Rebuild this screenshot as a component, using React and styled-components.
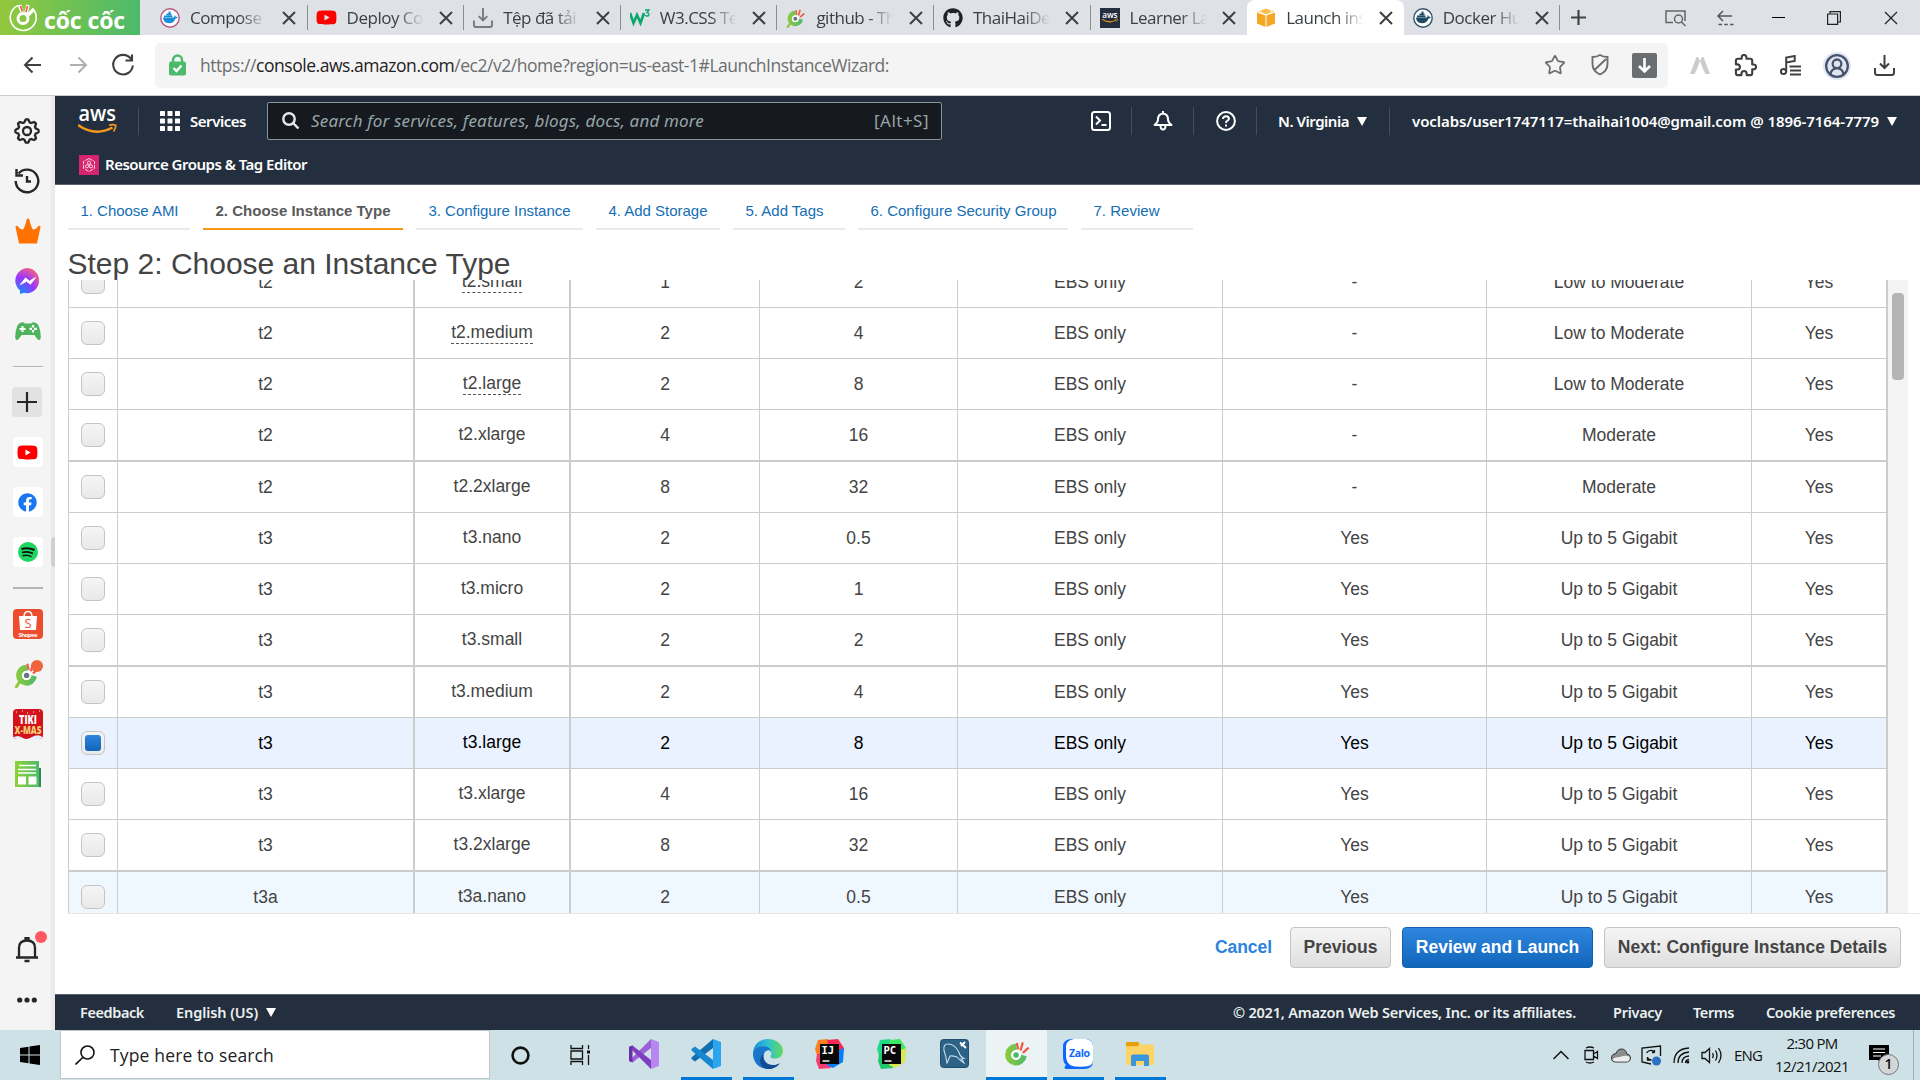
import React, { useLayoutEffect, useRef } from "react";
import styled, { createGlobalStyle, css } from "styled-components";
import { Star, CircleUserRound } from "lucide-react";
import { FaYoutube, FaGithub, FaFacebook } from "react-icons/fa";

const ui = `"Open Sans", "Noto Sans", sans-serif`;
const ember = `"Noto Sans", "Open Sans", sans-serif`;
const arial = `"Liberation Sans", Arial, sans-serif`;

const Global = createGlobalStyle`
  * { box-sizing: border-box; }
  body { margin: 0; background: #fff; overflow: hidden; }
  svg { display: block; flex: none; }
`;

const Screen = styled.div`
  width: 1920px;
  height: 1080px;
  display: flex;
  flex-direction: column;
  overflow: hidden;
  font-family: ${ui};
  color: #444;
`;

/* ---------- text tracked to a fixed measure ---------- */
const Measure = styled.span`
  display: block;
  flex: none;
  width: ${(p) => p.$w}px;
  margin-left: ${(p) => p.$ml || 0}px;
  white-space: nowrap;
`;

function Fit({ w, ml, children }) {
  const ref = useRef(null);
  useLayoutEffect(() => {
    const el = ref.current;
    el.style.letterSpacing = "0px";
    const natural = el.getBoundingClientRect().width;
    el.style.letterSpacing = `${(w - natural) / el.textContent.length}px`;
  }, [w, children]);
  return (
    <Measure $w={w} $ml={ml}>
      <span ref={ref}>{children}</span>
    </Measure>
  );
}

/* ---------- browser tab strip ---------- */
const TabStrip = styled.div`
  height: 35px;
  flex: none;
  display: flex;
  background: #dee1e6;
`;
const Brand = styled.div`
  width: 140px;
  display: flex;
  align-items: center;
  padding-left: 9px;
  gap: 6px;
  color: #fff;
  background: linear-gradient(90deg, #93c83d, #4cba6b);
  font: 700 23px/30px "Open Sans", sans-serif;
`;
const BrandName = styled.div`
  padding-top: 4px;
`;
const Tabs = styled.div`
  display: flex;
  margin-left: 11px;
`;
const Tab = styled.div`
  width: 156.6px;
  height: 35px;
  display: flex;
  align-items: center;
  padding-left: 9px;
  font-size: 17px;
  color: #3c4043;
  ${(p) =>
    p.$active &&
    css`
      background: #fff;
      border-radius: 8px 8px 0 0;
    `}
`;
const TabTitle = styled.div`
  width: 81px;
  margin-left: 10px;
  overflow: hidden;
  white-space: nowrap;
  letter-spacing: -0.5px;
  mask-image: linear-gradient(90deg, #000 64%, transparent 98%);
`;
const TabEnd = styled.div`
  display: flex;
  align-items: center;
  justify-content: space-between;
  width: 26px;
  margin-left: 14px;
  height: 25px;
  border-right: 1px solid ${(p) => (p.$line ? "#8a8d91" : "transparent")};
`;
const WindowTools = styled.div`
  display: flex;
  align-items: center;
  margin-left: auto;
  color: #222;
`;
const ToolSlot = styled.div`
  width: ${(p) => p.$w}px;
  display: flex;
  justify-content: center;
`;

/* ---------- address row ---------- */
const AddressRow = styled.div`
  height: 61px;
  flex: none;
  display: flex;
  align-items: center;
  background: #fff;
  border-bottom: 1px solid #cdcdcd;
  color: #3c4043;
`;
const NavButtons = styled.div`
  display: flex;
  align-items: center;
  width: 155px;
  padding-left: 10px;
`;
const UrlField = styled.div`
  width: 1513px;
  height: 45px;
  display: flex;
  align-items: center;
  padding-left: 14px;
  border-radius: 5px;
  background: #f4f4f4;
  font-size: 17.5px;
  color: #6b6e70;
  b {
    font-weight: 400;
    color: #1f2123;
  }
`;
const FieldIcons = styled.div`
  display: flex;
  align-items: center;
  margin-left: auto;
  padding-right: 1px;
  color: #6a6e70;
`;
const DownBox = styled.div`
  width: 25px;
  height: 25px;
  border-radius: 2px;
  background: #6a6e70;
  display: grid;
  place-items: center;
`;
const Extensions = styled.div`
  display: flex;
  align-items: center;
  padding: 1px 0 0 8px;
`;
const Halo = styled.div`
  width: 28px;
  height: 28px;
  border-radius: 50%;
  background: #dfe6f2;
  display: grid;
  place-items: center;
`;

/* ---------- browser sidebar ---------- */
const Middle = styled.div`
  display: flex;
  height: 934px;
  flex: none;
`;
const Sidebar = styled.div`
  width: 55px;
  flex: none;
  display: flex;
  flex-direction: column;
  padding: 10px 0 5px;
  background: linear-gradient(90deg, #f4f4f4 50px, #ededed 51px, #e8e8e8 55px);
  color: #262626;
`;
const SideItem = styled.div`
  position: relative;
  height: 50px;
  width: 55px;
  padding-right: ${(p) => p.$pr || 0}px;
  display: grid;
  place-items: center;
`;
const SideRule = styled.div`
  width: 30px;
  height: ${(p) => p.$h}px;
  margin: ${(p) => p.$m};
  background: #b5b5b5;
`;
const SideGap = styled.div`
  flex: 1;
`;
const AppTile = styled.div`
  width: 30px;
  height: 30px;
  border-radius: 4px;
  overflow: hidden;
  display: grid;
  place-items: center;
  background: ${(p) => p.$bg || "#fff"};
`;
const Dot = styled.div`
  position: absolute;
  left: ${(p) => p.$x}px;
  top: ${(p) => p.$y}px;
  width: 12px;
  height: 12px;
  border-radius: 50%;
  background: ${(p) => p.$c};
`;
const SideHandle = styled.div`
  position: absolute;
  right: 0;
  top: 10px;
  width: 4px;
  height: 30px;
  border-radius: 4px 0 0 4px;
  background: #cfcfcf;
`;

/* ---------- console ---------- */
const Console = styled.div`
  flex: 1;
  display: flex;
  flex-direction: column;
  background: #fff;
`;
const Header = styled.div`
  height: 89px;
  flex: none;
  background: #232f3e;
  border-bottom: 1px solid #5a6470;
  color: #fff;
  font-family: ${ember};
  font-weight: 600;
  font-size: 15px;
`;
const HeaderRow = styled.div`
  height: 50px;
  display: flex;
  align-items: center;
  padding-left: 23px;
`;
const Place = styled.div`
  margin-left: ${(p) => p.$ml}px;
`;
const VRule = styled.div`
  width: 1px;
  height: 28px;
  background: #424e5c;
  margin-left: ${(p) => p.$ml}px;
`;
const SearchBox = styled.div`
  width: 675px;
  height: 38px;
  margin-left: 21px;
  display: flex;
  align-items: center;
  padding: 0 12px 1px 14px;
  border: 1px solid #879596;
  border-radius: 2px;
  background: #16191f;
  color: #95a5a6;
  font-weight: 400;
  font-size: 17px;
  i {
    margin-left: 12px;
  }
  div {
    margin-left: auto;
  }
`;
const Caret = styled.div`
  margin-left: 8px;
  border: 5px solid transparent;
  border-top: 9px solid #fff;
  border-bottom: 0;
`;
const Favorites = styled.div`
  height: 38px;
  display: flex;
  align-items: center;
  padding-left: 24px;
  gap: 6px;
`;
const FavoriteName = styled.div`
  padding-bottom: 2px;
`;

const Steps = styled.div`
  display: flex;
  gap: 13px;
  padding: 0 0 0 13px;
  height: 45px;
  flex: none;
  font-family: ${arial};
`;
const Step = styled.div`
  width: ${(p) => p.$w}px;
  padding: 17px 0 0 12.5px;
  white-space: nowrap;
  font-size: 15px;
  line-height: 18px;
  color: ${(p) => (p.$on ? "#5a5a5a" : "#146eb4")};
  font-weight: ${(p) => (p.$on ? 700 : 400)};
  border-bottom: 2px solid ${(p) => (p.$on ? "#f7981d" : "#eaeaea")};
`;
const Title = styled.h1`
  margin: 0 0 0 12.5px;
  height: 50px;
  flex: none;
  position: relative;
  padding-top: 17px;
  font: 400 30px/34px ${arial};
  color: #444;
`;
const TableArea = styled.div`
  height: 634px;
  flex: none;
  display: flex;
  margin-left: 13px;
  overflow: hidden;
  border-bottom: 1px solid #e6e6e6;
`;
const Table = styled.div`
  width: 1820px;
  height: max-content;
  margin-top: -23px;
  border-left: 1px solid #ccc;
`;
const Row = styled.div`
  display: grid;
  grid-template-columns: 49px 297px 156px 189px 198px 265px 264px 265px 136px;
  height: ${(p) => (p.$thick ? 52 : 51)}px;
  font: 17.5px/20px ${arial};
  color: ${(p) => (p.$selected ? "#000" : "#444")};
  background: ${(p) => p.$bg};
`;
const Cell = styled.div`
  display: flex;
  align-items: center;
  justify-content: center;
  border-right: ${(p) => (p.$wide ? 2 : 1)}px solid #ccc;
  border-bottom: ${(p) => (p.$thick ? 2 : 1)}px solid #ccc;
`;
const TypeName = styled.span`
  height: 22px;
  border-bottom: 1px dashed ${(p) => (p.$hint ? "#555" : "transparent")};
`;
const Box = styled.div`
  width: 24px;
  height: 24px;
  border: 1px solid #c4c4c4;
  border-radius: 6px;
  display: grid;
  place-items: center;
  background: linear-gradient(#f5f5f5, #e9e9e9);
`;
const Mark = styled.div`
  width: 16px;
  height: 16px;
  border-radius: 3px;
  background: linear-gradient(#2e84dd, #1166bb);
`;
const ScrollTrack = styled.div`
  width: 20px;
  padding: 13px 4px 0;
  background: #f4f4f4;
`;
const Thumb = styled.div`
  height: 87px;
  border-radius: 4px;
  background: #b5b5b5;
`;
const Actions = styled.div`
  height: 80px;
  flex: none;
  display: flex;
  justify-content: flex-end;
  padding: 13px 19px 0 0;
  font: 700 17.5px/39px ${arial};
  white-space: nowrap;
`;
const Cancel = styled.div`
  color: #2b83db;
  margin-right: 18px;
  padding-top: 1px;
`;
const Button = styled.div`
  width: ${(p) => p.$w}px;
  height: 41px;
  display: flex;
  justify-content: center;
  margin-left: ${(p) => p.$ml || 0}px;
  border-radius: 4px;
  border: 1px solid ${(p) => (p.$primary ? "#1462ad" : "#c4c4c4")};
  color: ${(p) => (p.$primary ? "#fff" : "#444")};
  background: ${(p) =>
    p.$primary
      ? "linear-gradient(#2f86de, #1166bb)"
      : "linear-gradient(#f5f5f5, #dfdfdf)"};
`;
const Footer = styled.div`
  height: 36px;
  flex: none;
  display: flex;
  align-items: center;
  padding: 0 25px 1px 25px;
  border-top: 1px solid #5a6470;
  background: #232f3e;
  color: #eceff0;
  font: 600 14.5px/20px ${ember};
`;

/* ---------- Windows taskbar ---------- */
const Taskbar = styled.div`
  height: 50px;
  flex: none;
  display: flex;
  background: #cde1e6;
  color: #111;
`;
const StartButton = styled.div`
  width: 60px;
  display: grid;
  place-items: center;
`;
const TaskSearch = styled.div`
  width: 430px;
  height: 49px;
  display: flex;
  align-items: center;
  padding-left: 14px;
  gap: 15px;
  background: #fff;
  border: 1px solid #bfc6c8;
  font-size: 17.5px;
  color: #222;
`;
const TaskSlot = styled.div`
  width: ${(p) => p.$w || 62}px;
  height: 50px;
  margin-left: ${(p) => p.$ml || 0}px;
  display: flex;
  flex-direction: column;
  align-items: center;
  justify-content: center;
  background: ${(p) => (p.$active ? "#ebf3f5" : "none")};
`;
const IconHold = styled.div`
  flex: 1;
  display: grid;
  place-items: center;
  padding-bottom: ${(p) => (p.$run ? 0 : 3)}px;
`;
const RunBar = styled.div`
  width: ${(p) => (p.$active ? 61 : 51)}px;
  height: 3px;
  background: #0078d7;
`;
const Tray = styled.div`
  display: flex;
  align-items: center;
  margin-left: auto;
  font-size: 15px;
`;
const TraySlot = styled.div`
  width: 30px;
  display: flex;
  justify-content: center;
`;
const Clock = styled.div`
  width: 100px;
  height: 50px;
  display: flex;
  flex-direction: column;
  align-items: center;
  padding-top: 2px;
  line-height: 23px;
`;
const Notice = styled.div`
  position: relative;
  width: 52px;
  height: 50px;
  margin-right: 6px;
  padding: 15px 0 0 7px;
  border-right: 1px solid #9fb0b5;
`;
const Badge = styled.div`
  position: absolute;
  left: 16px;
  top: 24px;
  width: 21px;
  height: 21px;
  border: 1px solid #777;
  border-radius: 50%;
  background: #d3d6d7;
  font: 600 14px/18px ${ui};
  text-align: center;
`;

/* ---------- drawings ---------- */
const Ico = ({ s = 20, w, h, vb, children, sw = 2, ...p }) => (
  <svg
    width={w || s}
    height={h || s}
    viewBox={vb || `0 0 ${w || s} ${h || s}`}
    fill="none"
    stroke="currentColor"
    strokeWidth={sw}
    {...p}
  >
    {children}
  </svg>
);

const Cross = ({ s = 13, sw = 2 }) => (
  <Ico s={s} sw={sw}>
    <path d={`M1 1L${s - 1} ${s - 1}M${s - 1} 1L1 ${s - 1}`} />
  </Ico>
);

const Whale = ({ ring, fill }) => (
  <Ico s={20} sw={1.4}>
    <circle cx="10" cy="10" r="9.200" fill="#fff" stroke={ring} />
    <path
      d="M3 9.600h10.400c.8 0 1.300-1 1-2.600 1 .6 1.500 1.200 1.500 1.900.7-.1 1.400 0 1.900.4-.5 1-1.400 1.200-2.300 1.200-1 3.200-3 4.800-6.300 4.800-3.700 0-5.900-1.900-6.200-5.700z"
      fill={fill}
      stroke="none"
    />
    <path d="M4 8.400h8.500M6.500 6.400h5M8.500 4.500h2" stroke={fill} strokeWidth="1.900" />
  </Ico>
);

const CocRing = ({ s = 24, tail, c1 = "#8fca3c", c2 = "#4cba6b", rays = "#f0593e" }) => (
  <svg width={s} height={s} viewBox="0 0 24 24" fill="none">
    <defs>
      <linearGradient id={`cc${s}`} x1="0" x2="1">
        <stop offset="0" stopColor={c1} />
        <stop offset="1" stopColor={c2} />
      </linearGradient>
    </defs>
    {tail && <path d="M6 17L2 23" stroke={c1} strokeWidth="2.500" strokeLinecap="round" />}
    <path
      d="M11 3.300A9.300 9.300 0 1 0 20.300 14L15 12.500A4 4 0 1 1 12 9z"
      fill={`url(#cc${s})`}
    />
    <circle cx="11.200" cy="12.800" r="4.200" fill="#fff" />
    <circle cx="11.200" cy="12.800" r="2.400" fill={tail ? "#68777a" : c2} />
    <path d="M13 8L11.800 2.500M15 9L17 2M17 11L22 6.500" stroke={rays} strokeWidth="1.900" />
  </svg>
);

const AwsMark = ({ w = 39, h = 26, color = "#fff" }) => (
  <svg width={w} height={h} viewBox="0 0 39 26">
    <text
      x="0.500"
      y="13"
      fontFamily="Open Sans, sans-serif"
      fontWeight="600"
      fontSize="21.500"
      textLength="37.500"
      lengthAdjust="spacingAndGlyphs"
      fill={color}
    >
      aws
    </text>
    <path d="M0 17Q17 29 34.500 19.500" stroke="#f7981d" strokeWidth="2.500" fill="none" />
    <path d="M31 17.200Q35 16 37.800 17.300Q38 20 35.500 23.500" stroke="#f7981d" strokeWidth="1.700" fill="none" />
  </svg>
);

const gearPath = (() => {
  const pts = [];
  for (let i = 0; i < 64; i++) {
    const a = (i / 64) * Math.PI * 2;
    const r = 10.3 + Math.max(-1, Math.min(1, Math.cos(a * 8) * 1.7)) * 1.3;
    pts.push(`${(13 + r * Math.sin(a)).toFixed(2)} ${(13 - r * Math.cos(a)).toFixed(2)}`);
  }
  return `M${pts.join("L")}Z`;
})();

const DownloadTray = ({ s = 21, c = "currentColor" }) => (
  <Ico s={s} vb="0 0 21 21" stroke={c}>
    <path d="M10.500 0v12.500M6 8.500l4.500 4.500L15 8.500M1 13v4.500Q1 20 3.500 20h14q2.500 0 2.500-2.500V13" />
  </Ico>
);

const Doc3 = () => (
  <svg width="20" height="20" viewBox="0 0 20 20" fill="none">
    <path d="M0 5l3.500 10L7 7l3.500 8L14 5" stroke="#0aa66c" strokeWidth="2.600" />
    <path d="M15 2h4l-2 2.500q2 .2 2 1.800 0 1.800-2.200 1.700-1.300 0-1.800-.8" stroke="#0aa66c" strokeWidth="1.300" />
  </svg>
);

const Cube = () => (
  <svg width="20" height="20" viewBox="0 0 20 20">
    <path d="M1 4.500l8.500 3V19L1 15.500z" fill="#f5a623" />
    <path d="M19 4.500l-8.500 3V19l8.500-3.500z" fill="#f5a623" />
    <path d="M2 3.500L10 .5l8 3-8 2.800z" fill="#f9be4e" />
    <path d="M5 2v4M15 2v4" stroke="#fff" strokeWidth=".8" />
  </svg>
);

const AwsSquare = styled.div`
  width: 20px;
  height: 20px;
  background: #232f3e;
  display: grid;
  place-items: center;
`;
function AwsTile() {
  return (
    <AwsSquare>
      <AwsMark w={16} h={11} />
    </AwsSquare>
  );
}

const tabs = [
  ["Compose W", <Whale ring="#b9567f" fill="#1b8fd6" />],
  ["Deploy Con", <FaYoutube size={21} color="#f00" />],
  ["Tệp đã tải x", <DownloadTray s={20} c="#777b80" />],
  ["W3.CSS Tem", <Doc3 />],
  ["github - Th", <CocRing s={20} tail />],
  ["ThaiHaiDev", <FaGithub size={20} color="#1f2328" />],
  ["Learner Lab", <AwsTile />],
  ["Launch inst", <Cube />],
  ["Docker Hub", <Whale ring="#33556b" fill="#1f4a63" />],
];

function BrowserTabs() {
  return (
    <TabStrip>
      <Brand>
        <svg width="29" height="29" viewBox="0 0 29 29" fill="none">
          <path d="M9 2.600A13 13 0 1 0 25.500 8" stroke="#fff" strokeWidth="1.600" />
          <circle cx="14" cy="15.500" r="5" stroke="#fff" strokeWidth="3" />
          <path d="M13 9L10.500 2M17 10l2-8M19 12l6-6" stroke="#fff" strokeWidth="3.600" />
          <path d="M13.300 8.500L11.500 3M17 9l1.500-6" stroke="#f0593e" strokeWidth="1.600" />
        </svg>
        <BrandName>
          <Fit w={81}>cốc cốc</Fit>
        </BrandName>
      </Brand>
      <Tabs>
        {tabs.map(([name, icon], i) => (
          <Tab key={name} $active={i === 7}>
            <ToolSlot $w={20}>{icon}</ToolSlot>
            <TabTitle>{name}</TabTitle>
            <TabEnd $line={i !== 7 && i !== 6}>
              <Cross s={14} sw={2} />
            </TabEnd>
          </Tab>
        ))}
        <ToolSlot $w={36}>
          <Ico w={15} h={35} sw={2.2}>
            <path d="M7.500 10v15M0 17.500h15" />
          </Ico>
        </ToolSlot>
      </Tabs>
      <WindowTools>
        <ToolSlot $w={50}>
          <Ico w={21} h={18} sw={1.5} stroke="#666">
            <path d="M8 13.500H1V2h19v10" />
            <circle cx="13.500" cy="10" r="4" />
            <path d="M16.500 13l4 4" />
          </Ico>
        </ToolSlot>
        <ToolSlot $w={50}>
          <Ico w={18} h={18} sw={1.5} stroke="#555">
            <path d="M16 7H2M7 2L2 7l5 5" />
            <path d="M2.500 15.500h15" strokeDasharray="3.500 2.300" />
          </Ico>
        </ToolSlot>
        <ToolSlot $w={56}>
          <Ico w={13} h={13} sw={1}>
            <path d="M0 6.500h13" stroke="#000" />
          </Ico>
        </ToolSlot>
        <ToolSlot $w={56}>
          <Ico s={14} sw={1.2}>
            <path d="M.6 3h10v10.400H.6zM3 3V.6h10.400V11H11" />
          </Ico>
        </ToolSlot>
        <ToolSlot $w={58}>
          <Cross s={14} sw={1.2} />
        </ToolSlot>
      </WindowTools>
    </TabStrip>
  );
}

function AddressBar() {
  return (
    <AddressRow>
      <NavButtons>
        <ToolSlot $w={45}>
          <Ico s={22}>
            <path d="M19 11H3M10.500 3.500L3 11l7.500 7.500" />
          </Ico>
        </ToolSlot>
        <ToolSlot $w={45}>
          <Ico s={22} stroke="#b0b0b0">
            <path d="M3 11h16M11.500 3.500L19 11l-7.500 7.500" />
          </Ico>
        </ToolSlot>
        <ToolSlot $w={45}>
          <Ico s={24} sw={2.1}>
            <path d="M20 6A9.800 9.800 0 1 0 21.800 12.500M21 1.500v6H14.500" />
          </Ico>
        </ToolSlot>
      </NavButtons>
      <UrlField>
        <Ico w={17} h={22} sw={2.4}>
          <path d="M4 9V6a4.500 4.500 0 0 1 9 0v3" stroke="#4cba6b" />
          <rect x="0" y="7.500" width="17" height="14" rx="2" fill="#4cba6b" stroke="none" />
          <path d="M4.500 14l3 3 5-5.500" stroke="#fff" />
        </Ico>
        <Fit w={689} ml={14}>
          https://<b>console.aws.amazon.com</b>/ec2/v2/home?region=us-east-1#LaunchInstanceWizard:
        </Fit>
        <FieldIcons>
          <ToolSlot $w={45}>
            <Star size={22} strokeWidth={1.9} />
          </ToolSlot>
          <ToolSlot $w={45}>
            <Ico w={18} h={22} sw={1.9}>
              <path d="M1.500 3Q6 3 9 1q3 2 7.500 2v7q0 7-7.500 10.500Q1.500 17 1.500 10zM3.500 16L15 5" />
            </Ico>
          </ToolSlot>
          <ToolSlot $w={45}>
            <DownBox>
              <Ico s={17} sw={2.6} stroke="#fff">
                <path d="M8.500 1v13M3 9l5.500 5.500L14 9" />
              </Ico>
            </DownBox>
          </ToolSlot>
        </FieldIcons>
      </UrlField>
      <Extensions>
        <ToolSlot $w={48}>
          <svg width="20" height="17" viewBox="0 0 20 17">
            <path d="M0 17L6.500 0H8l2 4-3.500 9-2 4zM20 17L13.500 0H12l-2 4 3.500 9 2 4z" fill="#cbcbcb" />
          </svg>
        </ToolSlot>
        <ToolSlot $w={43}>
          <Ico s={23} sw={2.2} vb="0 0 24 24">
            <path
              d="M20.500 11H19V7c0-1.100-.9-2-2-2h-4V3.500a2.500 2.500 0 0 0-5 0V5H4c-1.100 0-2 .9-2 2v3.800h1.500c1.500 0 2.700 1.200 2.700 2.700S5 16.200 3.500 16.200H2V20c0 1.100.9 2 2 2h3.800v-1.500c0-1.500 1.200-2.700 2.700-2.700s2.700 1.200 2.700 2.700V22H17c1.100 0 2-.9 2-2v-4h1.500a2.500 2.500 0 0 0 0-5z"
              strokeLinejoin="round"
            />
          </Ico>
        </ToolSlot>
        <ToolSlot $w={46}>
          <Ico w={21} h={21}>
            <circle cx="3.500" cy="16.500" r="2.600" />
            <path d="M6.200 16.500V2.500l8.500-1.500v5l-8.500 1.500M9.500 11.500H21M10 15.500h11M10 19.500h11" />
          </Ico>
        </ToolSlot>
        <ToolSlot $w={47}>
          <Halo>
            <CircleUserRound size={26} strokeWidth={2.1} color="#46536b" />
          </Halo>
        </ToolSlot>
        <ToolSlot $w={49}>
          <DownloadTray />
        </ToolSlot>
      </Extensions>
    </AddressRow>
  );
}

function BrowserSidebar() {
  return (
    <Sidebar>
      <SideItem $pr={1}>
        <Ico s={26} sw={2.3}>
          <path d={gearPath} strokeLinejoin="round" />
          <circle cx="13" cy="13" r="4" />
        </Ico>
      </SideItem>
      <SideItem $pr={1}>
        <Ico s={26} sw={2.4}>
          <path d="M4.500 5.500A11.300 11.300 0 1 1 1.700 13M2.500 1v6.500H9" />
          <path d="M13 8v5.500h4" />
        </Ico>
      </SideItem>
      <SideItem>
        <svg width="26" height="26" viewBox="0 0 26 26">
          <path
            d="M4 25.500L.5 9Q.8 7 2.500 8q3 4 5.500 3.500Q10 9 11.500 2q1.500-3.500 3 0Q16 9 18 11.500q2.500.500 5.500-3.500 1.700-1 2 1L22 25.500z"
            fill="#ff7200"
          />
        </svg>
      </SideItem>
      <SideItem>
        <svg width="26" height="26" viewBox="0 0 26 26">
          <defs>
            <radialGradient id="msg" cx=".2" cy="1" r="1.150">
              <stop offset="0" stopColor="#0695ff" />
              <stop offset=".55" stopColor="#9a35ff" />
              <stop offset="1" stopColor="#ff6a72" />
            </radialGradient>
          </defs>
          <path d="M13 0a12.700 12.700 0 0 1 0 25.200q-2 0-3.800-.5L5 26v-3.600A12.600 12.600 0 0 1 13 0z" fill="url(#msg)" />
          <path d="M5.500 16.500L10.500 10l4 3.200 6-3.700-5 6.700-4-3z" fill="#fff" stroke="#fff" />
        </svg>
      </SideItem>
      <SideItem>
        <svg width="26" height="18" viewBox="0 0 26 18">
          <path
            d="M5 1q3-1.500 5 .5h6q2-2 5-.5 3 1 4.300 9 1.400 8-1.300 8-1.500 0-4.500-5h-13Q3.500 18 2 18-.7 18 .7 10 2 2 5 1z"
            fill="#4fb35b"
          />
          <path d="M4.500 7h6M7.500 4v6" stroke="#fff" strokeWidth="2" />
          <path d="M18 3v2.500M18 8v2.500M14.500 6.800H17M19 6.800h3" stroke="#fff" strokeWidth="2.200" />
        </svg>
      </SideItem>
      <SideRule $h={1} $m="10px 0 10px 13px" />
      <SideItem $pr={1}>
        <AppTile $bg="#e2e2e2">
          <Ico s={20} sw={2.2}>
            <path d="M10 0v20M0 10h20" />
          </Ico>
        </AppTile>
      </SideItem>
      <SideItem>
        <AppTile>
          <FaYoutube size={21} color="#f00" />
        </AppTile>
      </SideItem>
      <SideItem>
        <AppTile>
          <FaFacebook size={19} color="#1877f2" />
        </AppTile>
      </SideItem>
      <SideItem>
        <AppTile>
          <svg width="20" height="20" viewBox="0 0 20 20" fill="none" stroke="#111">
            <circle cx="10" cy="10" r="10" fill="#1ed760" stroke="none" />
            <path d="M3.500 7q7-2 13 1" strokeWidth="2" />
            <path d="M4 10.500q6-1.600 11 1" strokeWidth="1.700" />
            <path d="M4.500 13.700q5-1.300 9 1" strokeWidth="1.500" />
          </svg>
        </AppTile>
        <SideHandle />
      </SideItem>
      <SideRule $h={2} $m="10px 0 10px 13px" />
      <SideItem>
        <AppTile $bg="#ee4d2d">
          <svg width="30" height="30" viewBox="0 0 30 30">
            <path d="M6 7h18l-1 14H7z" fill="#fff" />
            <path d="M11 8q0-5.500 4-5.500T19 8" fill="none" stroke="#fff" strokeWidth="1.500" />
            <text x="15" y="19" textAnchor="middle" fontFamily="Open Sans, sans-serif" fontSize="13" fill="#ee4d2d">
              S
            </text>
            <text
              x="15"
              y="27.500"
              textAnchor="middle"
              fontFamily="Open Sans, sans-serif"
              fontWeight="700"
              fontSize="6"
              textLength="19"
              fill="#fff"
            >
              Shopee
            </text>
          </svg>
        </AppTile>
      </SideItem>
      <SideItem>
        <CocRing s={27} tail />
        <Dot $x={31} $y={11} $c="#f0643c" />
      </SideItem>
      <SideItem>
        <AppTile $bg="#d3121b">
          <svg width="30" height="30" viewBox="0 0 30 30">
            <text
              x="15"
              y="14.500"
              textAnchor="middle"
              fontFamily="Open Sans, sans-serif"
              fontWeight="800"
              fontSize="11.500"
              textLength="18"
              lengthAdjust="spacingAndGlyphs"
              fill="#fff"
            >
              TIKI
            </text>
            <text
              x="15"
              y="24.500"
              textAnchor="middle"
              fontFamily="Open Sans, sans-serif"
              fontWeight="800"
              fontSize="10.500"
              textLength="27"
              lengthAdjust="spacingAndGlyphs"
              fill="#f5cf72"
            >
              X-MAS
            </text>
            <path d="M0 28.500q5-3 9 0t10-.5 11 .5v2H0z" fill="#e4eefb" />
            <path d="M3 3h1M9 2h1M20 3h1M26 2h1M14 4h1" stroke="#fff" />
          </svg>
        </AppTile>
      </SideItem>
      <SideItem>
        <svg width="26" height="26" viewBox="0 0 26 26">
          <defs>
            <linearGradient id="news">
              <stop offset="0" stopColor="#8ed233" />
              <stop offset="1" stopColor="#4cba6b" />
            </linearGradient>
          </defs>
          <path d="M20 7h6v19h-6z" fill="#2e8b57" />
          <path d="M0 0h24v26H0z" fill="url(#news)" />
          <path d="M4 4.500h17M3 8.500h18M3 12h18" stroke="#fff" strokeWidth="1.700" />
          <path d="M3 15.500h8v8H3zM13.500 15.500h8v8h-8z" fill="#fff" />
        </svg>
      </SideItem>
      <SideGap />
      <SideItem $pr={1}>
        <Ico w={24} h={26} sw={2.3}>
          <path d="M4 20V11q0-7.500 8-7.500t8 7.500v9M1 20.500h22" />
          <path d="M10.500 4V1h3v3M9.500 24h5" />
        </Ico>
        <Dot $x={35} $y={6} $c="#ff5a60" />
      </SideItem>
      <SideItem $pr={1}>
        <svg width="20" height="6" viewBox="0 0 20 6">
          <circle cx="2.700" cy="3" r="2.600" fill="#262626" />
          <circle cx="10" cy="3" r="2.600" fill="#262626" />
          <circle cx="17.300" cy="3" r="2.600" fill="#262626" />
        </svg>
      </SideItem>
    </Sidebar>
  );
}

function ConsoleHeader() {
  return (
    <Header>
      <HeaderRow>
        <AwsMark />
        <VRule $ml={21} />
        <Place $ml={21}>
          <svg width="20" height="20" viewBox="0 0 20 20" fill="#fff">
            {[0, 7.5, 15].map((y) =>
              [0, 7.5, 15].map((x) => (
                <rect key={`${x}-${y}`} x={x} y={y} width="5" height="5" rx=".6" />
              ))
            )}
          </svg>
        </Place>
        <Fit w={56} ml={10}>Services</Fit>
        <SearchBox>
          <Ico s={17} sw={2.4} stroke="#e6e9ea">
            <circle cx="7" cy="7" r="5.700" />
            <path d="M11 11l5.500 5.500" />
          </Ico>
          <i>
            <Fit w={393}>Search for services, features, blogs, docs, and more</Fit>
          </i>
          <div>
            <Fit w={55}>[Alt+S]</Fit>
          </div>
        </SearchBox>
        <Place $ml={149}>
          <Ico s={20}>
            <rect x="1" y="1" width="18" height="18" rx="2.500" />
            <path d="M5 5.500l4 4-4 4M10.500 14h5" />
          </Ico>
        </Place>
        <VRule $ml={20} />
        <Place $ml={21}>
          <Ico s={20}>
            <path
              d="M10 0v2.500M10 2.500Q5 3 5 8.500 5 11.500 1.500 14h17Q15 11.500 15 8.500 15 3 10 2.500zM7.500 14.500q0 4 2.500 4t2.500-4"
              strokeLinejoin="round"
            />
          </Ico>
        </Place>
        <VRule $ml={20} />
        <Place $ml={22}>
          <Ico s={20}>
            <circle cx="10" cy="10" r="8.900" />
            <path d="M7 8q.2-2.700 3-2.700T13 7.800Q13 9 11.500 9.700T10 12M10 13.500v2" />
          </Ico>
        </Place>
        <VRule $ml={20} />
        <Fit w={71} ml={21}>N. Virginia</Fit>
        <Caret />
        <VRule $ml={22} />
        <Fit w={467} ml={22}>voclabs/user1747117=thaihai1004@gmail.com @ 1896-7164-7779</Fit>
        <Caret />
      </HeaderRow>
      <Favorites>
        <svg width="20" height="20" viewBox="0 0 20 20" fill="none" stroke="#ffd3e4">
          <path d="M0 0h20v20H0z" fill="#d6246e" stroke="none" />
          <path d="M10 3.500l5.500 3v7L10 16.500l-5.500-3v-7z" strokeDasharray="4 1" />
          <circle cx="10" cy="7.700" r="1.600" />
          <circle cx="8" cy="11.300" r="1.600" />
          <circle cx="12" cy="11.300" r="1.600" />
        </svg>
        <FavoriteName>
          <Fit w={202}>{"Resource Groups & Tag Editor"}</Fit>
        </FavoriteName>
      </Favorites>
    </Header>
  );
}

const steps = [
  ["1. Choose AMI", 122, 98],
  ["2. Choose Instance Type", 200, 175],
  ["3. Configure Instance", 167, 142],
  ["4. Add Storage", 124, 99],
  ["5. Add Tags", 112, 78],
  ["6. Configure Security Group", 210, 186],
  ["7. Review", 112, 66],
];

const rows = [
  ["t2", "t2.small", "1", "2", "-", "Low to Moderate", true],
  ["t2", "t2.medium", "2", "4", "-", "Low to Moderate", true],
  ["t2", "t2.large", "2", "8", "-", "Low to Moderate", true],
  ["t2", "t2.xlarge", "4", "16", "-", "Moderate"],
  ["t2", "t2.2xlarge", "8", "32", "-", "Moderate"],
  ["t3", "t3.nano", "2", "0.5", "Yes", "Up to 5 Gigabit"],
  ["t3", "t3.micro", "2", "1", "Yes", "Up to 5 Gigabit"],
  ["t3", "t3.small", "2", "2", "Yes", "Up to 5 Gigabit"],
  ["t3", "t3.medium", "2", "4", "Yes", "Up to 5 Gigabit"],
  ["t3", "t3.large", "2", "8", "Yes", "Up to 5 Gigabit"],
  ["t3", "t3.xlarge", "4", "16", "Yes", "Up to 5 Gigabit"],
  ["t3", "t3.2xlarge", "8", "32", "Yes", "Up to 5 Gigabit"],
  ["t3a", "t3a.nano", "2", "0.5", "Yes", "Up to 5 Gigabit"],
];

function InstanceTable() {
  return (
    <TableArea>
      <Table>
        {rows.map(([family, type, cpu, mem, opt, net, hint], i) => {
          const selected = i === 9;
          const thick = i % 4 === 3;
          const bg = selected ? "#eaf2ff" : i === 12 ? "#f0f8ff" : "#fff";
          return (
            <Row key={type} $bg={bg} $thick={thick} $selected={selected}>
              <Cell $thick={thick}>
                <Box>{selected && <Mark />}</Box>
              </Cell>
              <Cell $thick={thick} $wide>{family}</Cell>
              <Cell $thick={thick} $wide>
                <TypeName $hint={hint}>{type}</TypeName>
              </Cell>
              <Cell $thick={thick}>{cpu}</Cell>
              <Cell $thick={thick}>{mem}</Cell>
              <Cell $thick={thick}>EBS only</Cell>
              <Cell $thick={thick}>{opt}</Cell>
              <Cell $thick={thick}>{net}</Cell>
              <Cell $thick={thick} $wide>Yes</Cell>
            </Row>
          );
        })}
      </Table>
      <ScrollTrack>
        <Thumb />
      </ScrollTrack>
    </TableArea>
  );
}

const VisualStudio = () => (
  <svg width="30" height="30" viewBox="0 0 30 30">
    <path d="M22 0l8 3v24l-8 3z" fill="#b786f0" />
    <path d="M22 0v9L3.500 23.500 0 22z" fill="#9b5fd8" />
    <path d="M22 30v-9L3.500 6.500 0 8z" fill="#7d3fc0" />
    <path d="M0 8l3.500-1.500v17L0 22z" fill="#6a2fa8" />
  </svg>
);
const VsCode = () => (
  <svg width="30" height="30" viewBox="0 0 30 30">
    <path d="M22 0v9L4 22.500.5 20v-1.500z" fill="#1070b3" />
    <path d="M22 30v-9L4 7.500.5 10v1.500z" fill="#1787cf" />
    <path d="M22 0l8 3v24l-8 3z" fill="#2aa5f0" />
  </svg>
);
const Edge = () => (
  <svg width="30" height="30" viewBox="0 0 30 30">
    <defs>
      <linearGradient id="e1">
        <stop offset="0" stopColor="#1b8fd8" />
        <stop offset=".5" stopColor="#2fc1cf" />
        <stop offset="1" stopColor="#63dc58" />
      </linearGradient>
    </defs>
    <path
      d="M0 15C0 5 7 0 15 0s15 5 15 12c0 5-4 7.500-8 7.500-4 0-5.500-1.500-4-3.500 1-2 0-6-5-6-6 0-11 3-13 5z"
      fill="url(#e1)"
    />
    <path
      d="M0 15C1 9 6 7.500 11 7.500c4 0 7 2 7 5.500-1-2-3-2-5-1-4 3-3 12 5 14 4 1 7-.5 9-2C24 28 20 30 15 30 6 30 0 23 0 15z"
      fill="#1a74c9"
    />
    <path d="M10 15c-1 7 4 11 10 11 3 0 5-.5 7-2-3 4-7 6-12 6C7 30 5 20 10 15z" fill="#114a90" />
  </svg>
);
const JetBrains = ({ label, colors }) => (
  <svg width="30" height="30" viewBox="0 0 30 30">
    <path d="M3 1l10-1 3 14L3 20 0 10z" fill={colors[0]} />
    <path d="M12 1l11-1 6 9-2 10-12-4z" fill={colors[1]} />
    <path d="M2 15l12-2 2 16-12 1-3-8z" fill={colors[2]} />
    <path d="M14 15l15-6-1 14-10 6-6-3z" fill={colors[3]} />
    <path d="M5 5h19v20H5z" fill="#080808" />
    <path d="M7.500 22h7" stroke="#fff" strokeWidth="1.400" />
    <text x="6.500" y="14.500" fontFamily="DejaVu Sans Mono, monospace" fontWeight="700" fontSize="10.500" fill="#fff">
      {label}
    </text>
  </svg>
);
const MySql = () => (
  <svg width="29" height="29" viewBox="0 0 29 29" fill="none">
    <rect x=".5" y=".5" width="28" height="28" rx="3" fill="#2c6286" stroke="#234e6b" />
    <path
      d="M7 24Q6 17 4 11.500 3 5 8 5q7 0 11 8.500 1 4 5 6l-3 .500q2 1.500 3 4-4-2.500-7-6-5-1.500-7-1-1 3-3 7z"
      stroke="#c5dbe8"
      strokeWidth="1.100"
    />
    <path d="M20 3.500l6 5.500M21 7l4-4" stroke="#fff" strokeWidth="2" />
  </svg>
);
const Zalo = () => (
  <svg width="30" height="30" viewBox="0 0 30 30">
    <path d="M9 0h13q8 0 8 8v14q0 8-9 8H3q-3-1 0-4-3-3-3-8V8Q0 0 9 0z" fill="#0a68ff" />
    <path d="M11 0h12q7 1 7 8v13q0 6.500-8 6.500-9 1-14-1-5-3-5-10V8Q3 1 11 0z" fill="#fff" />
    <text
      x="16.500"
      y="17.500"
      textAnchor="middle"
      fontFamily="Open Sans, sans-serif"
      fontWeight="700"
      fontSize="10.500"
      textLength="21"
      fill="#0a68ff"
    >
      Zalo
    </text>
  </svg>
);
const Folder = () => (
  <svg width="28" height="24" viewBox="0 0 28 24">
    <path d="M0 1.500Q0 0 1.500 0H12l3 2.500h11.500Q28 2.500 28 4v17.500q0 1.500-2 1.500H2q-2 0-2-1.500z" fill="#fcd364" />
    <path d="M0 1.500Q0 0 1.500 0H12l1.500 1.800-2 2.400H0z" fill="#e3a008" />
    <path d="M5 24v-9.500q0-2 2-2h14q2 0 2 2V24h-5v-5h-8v5z" fill="#3a96dd" />
  </svg>
);

const apps = [
  [<VisualStudio />],
  [<VsCode />, true],
  [<Edge />, true],
  [<JetBrains label="IJ" colors={["#fc801d", "#fe2857", "#f53d72", "#087cfa"]} />],
  [<JetBrains label="PC" colors={["#21d789", "#3bea62", "#21c76b", "#d9e84a"]} />],
  [<MySql />],
  [<CocRing s={28} />, true, true],
  [<Zalo />, true],
  [<Folder />, true],
];

function WindowsTaskbar() {
  return (
    <Taskbar>
      <StartButton>
        <svg width="20" height="20" viewBox="0 0 20 20">
          <path
            d="M0 3l8.500-1.200v7.700H0zM9.500 1.600L20 0v9.500H9.500zM0 10.500h8.500v7.700L0 17zM9.500 10.500H20V20L9.500 18.400z"
            fill="#000"
          />
        </svg>
      </StartButton>
      <TaskSearch>
        <Ico s={20} sw={1.6} stroke="#111">
          <circle cx="12.500" cy="7.500" r="6.500" />
          <path d="M8 12.200L.5 19.500" />
        </Ico>
        <Fit w={164}>Type here to search</Fit>
      </TaskSearch>
      <TaskSlot $w={60}>
        <Ico s={19} sw={2.6}>
          <circle cx="9.500" cy="9.500" r="7.900" />
        </Ico>
      </TaskSlot>
      <TaskSlot $w={60}>
        <Ico s={20} sw={1.3}>
          <path d="M1 0v3.500h11.500V0M1 6h11.500v8H1zM1 20v-3.500h11.500V20M18.500 0v4M18.500 10v10" />
          <path d="M17 5.500h3v3h-3z" fill="#111" stroke="none" />
        </Ico>
      </TaskSlot>
      {apps.map(([icon, run, active], i) => (
        <TaskSlot key={i} $w={active ? 61 : 62} $ml={i === 0 ? 3 : active ? 1 : 0} $active={active}>
          <IconHold $run={run}>{icon}</IconHold>
          {run && <RunBar $active={active} />}
        </TaskSlot>
      ))}
      <Tray>
        <TraySlot>
          <Ico w={16} h={10} sw={1.5}>
            <path d="M.5 9L8 1.500 15.500 9" />
          </Ico>
        </TraySlot>
        <TraySlot>
          <Ico w={15} h={18} sw={1.3}>
            <path d="M1 4.500h8.500v9H1zM9.500 8l4-2.500v7l-4-2.500M2 2Q6 0 10 2M2 16q4 2 8 0" />
          </Ico>
        </TraySlot>
        <TraySlot>
          <svg width="20" height="15" viewBox="0 0 20 15" stroke="#333">
            <path d="M5 14q-4.500 0-4.500-4T5 5.500Q6.500 1 10.500 1T16 6q3.500.500 3.500 4T16 14z" fill="#8d8d8d" />
            <path d="M5 13.500Q2 13.500 1.500 11q4-2.500 7.500-2 5-2 9.500-.5.500 5-2.500 5z" fill="#eee" stroke="none" />
          </svg>
        </TraySlot>
        <TraySlot>
          <Ico s={21} sw={1.3}>
            <path d="M10 19L1 17V3l18.500-2v10" />
            <path d="M5.500 8q2-3 5.500-2.500 2 .5 2.500 2V5M13.500 7.500H11M10 15H6.500v-3M6.500 12.500q1 2.500 4 2.500" />
            <circle cx="15.500" cy="16" r="4.500" fill="#2b73c2" stroke="none" />
          </Ico>
        </TraySlot>
        <TraySlot>
          <Ico s={17} sw={1.3}>
            <path d="M1 16Q1 2 16 1M5 16Q5 6 16 5M9 16q0-6.500 7-7M12.500 16q0-3 3.500-3.500" />
            <circle cx="14.800" cy="15" r="1.600" fill="#111" stroke="none" />
          </Ico>
        </TraySlot>
        <TraySlot>
          <Ico w={21} h={17} sw={1.3}>
            <path d="M1 5.500h3l4.500-4v14l-4.500-4H1zM11.500 6q1.500 2.500 0 5M14.500 3.500q3 5 0 10M17.500 1q5 7.500 0 15" />
          </Ico>
        </TraySlot>
        <Fit w={28} ml={8}>ENG</Fit>
        <Clock>
          <Fit w={51}>2:30 PM</Fit>
          <Fit w={74}>12/21/2021</Fit>
        </Clock>
        <Notice>
          <svg width="20" height="20" viewBox="0 0 20 20">
            <path d="M0 0h20v15h-7v4l-4-4H0z" fill="#000" />
            <path d="M4 4h12M4 7.500h12M4 11h8" stroke="#fff" strokeWidth="1.200" />
          </svg>
          <Badge>1</Badge>
        </Notice>
      </Tray>
    </Taskbar>
  );
}

export default function App() {
  return (
    <Screen>
      <Global />
      <BrowserTabs />
      <AddressBar />
      <Middle>
        <BrowserSidebar />
        <Console>
          <ConsoleHeader />
          <Steps>
            {steps.map(([label, w, tw], i) => (
              <Step key={label} $w={w} $on={i === 1}>
                <Fit w={tw}>{label}</Fit>
              </Step>
            ))}
          </Steps>
          <Title>
            <Fit w={443}>Step 2: Choose an Instance Type</Fit>
          </Title>
          <InstanceTable />
          <Actions>
            <Cancel>
              <Fit w={57}>Cancel</Fit>
            </Cancel>
            <Button $w={101}>Previous</Button>
            <Button $w={191} $ml={11} $primary>Review and Launch</Button>
            <Button $w={297} $ml={11}>Next: Configure Instance Details</Button>
          </Actions>
          <Footer>
            <Fit w={64}>Feedback</Fit>
            <Fit w={82} ml={32}>English (US)</Fit>
            <Caret />
            <SideGap />
            <Fit w={343}>© 2021, Amazon Web Services, Inc. or its affiliates.</Fit>
            <Fit w={49} ml={37}>Privacy</Fit>
            <Fit w={41} ml={31}>Terms</Fit>
            <Fit w={129} ml={32}>Cookie preferences</Fit>
          </Footer>
        </Console>
      </Middle>
      <WindowsTaskbar />
    </Screen>
  );
}
